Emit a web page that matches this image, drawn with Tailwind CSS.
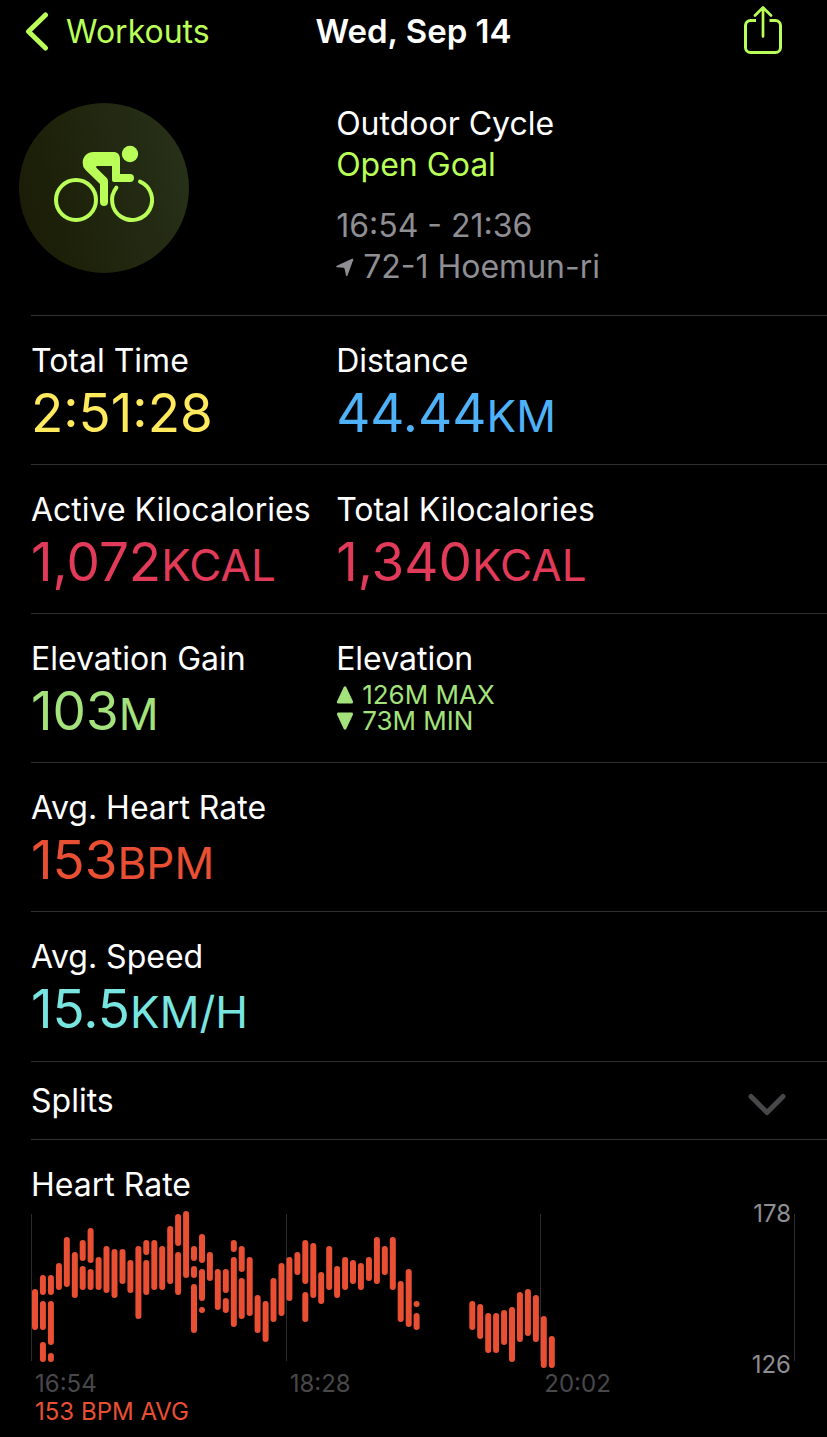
<!DOCTYPE html>
<html lang="en">
<head>
    <meta charset="UTF-8">
    <meta name="viewport" content="width=device-width, initial-scale=1.0">
    <title>Workout - Wed, Sep 14</title>
    <script src="https://cdn.jsdelivr.net/npm/@tailwindcss/browser@4"></script>
</head>
<body class="bg-black min-h-screen text-white font-['Inter',sans-serif] text-[32px] leading-[41px]">
    <!-- Nav bar -->
    <header class="grid grid-cols-[1fr_auto_1fr] items-center h-[62px] px-6">
        <a href="#" class="flex items-center gap-4 text-[#b9ff57]">
            <svg class="w-[26px] h-[40px]" viewBox="0 0 26 40" fill="none" stroke="currentColor" stroke-width="5" stroke-linecap="round" stroke-linejoin="round">
                <path d="M21.500 4 4.500 20.500 21.500 37"/>
            </svg>
            Workouts
        </a>
        <h1 class="text-[33px] font-semibold">Wed, Sep 14</h1>
        <button type="button" aria-label="Share" class="justify-self-end mr-5 text-[#b9ff57]">
            <svg class="w-[40px] h-[50px]" viewBox="0 0 40 50" fill="none" stroke="currentColor" stroke-width="3" stroke-linecap="round" stroke-linejoin="round">
                <path d="M13 14.500H7.500a5 5 0 0 0-5 5V41.500a5 5 0 0 0 5 5H32.500a5 5 0 0 0 5-5V19.500a5 5 0 0 0-5-5H26.500" stroke-linecap="butt"/>
                <path d="M20 30.500V2M12 9.500 20 1.500 28 9.500" stroke-width="2.700"/>
            </svg>
        </button>
    </header>

    <main class="pl-[31px]">
        <!-- Workout summary -->
        <section class="grid grid-cols-[23fr_37fr] pt-[41px] pb-7">
            <div class="-ml-3 size-[170px] rounded-full bg-linear-75 from-[#1a1b05] to-[#28321a]">
                <svg viewBox="0 0 510 510" fill="none" stroke="#b9ff57" stroke-width="12" stroke-linecap="round">
                    <circle cx="171" cy="291" r="60"/>
                    <path d="M363 236A60 60 0 1 1 292 254"/>
                    <g fill="#b9ff57" stroke="none">
                        <circle cx="333" cy="153" r="24.500"/>
                        <path d="M191 179c0-18 14-32 32-32H283c12 0 20 8 20 20V213H333a12 12 0 0 1 0 24H285q-6 0-6-6V189H235q-6 0-3 5L264 226q3 3 3 8V297a12 12 0 0 1-24 0V243L199 200q-8-8-8-21z"/>
                    </g>
                </svg>
            </div>
            <div>
                <p>Outdoor Cycle</p>
                <p class="text-[#b9ff57]">Open Goal</p>
                <p class="mt-5 text-[#8e8e93]">16:54 - 21:36</p>
                <p class="flex items-center gap-2 text-[#8e8e93]">
                    <svg class="w-[19px] h-[23px]" viewBox="0 -3 19 23" fill="currentColor">
                        <path d="M16 .800Q17.700.200 17.200 1.900L11.500 17.600Q10.800 19 10 17.500L8.600 11Q8.400 9.900 7.400 9.800L.900 9.200Q-.400 8.500.800 7.700z"/>
                    </svg>
                    72-1 Hoemun-ri
                </p>
            </div>
        </section>

        <!-- Metrics -->
        <dl>
            <div class="grid grid-cols-[23fr_37fr] border-t border-[#303032] pt-6 pb-[19px]">
                <div>
                    <dt>Total Time</dt>
                    <dd class="text-[53px] leading-[64px] text-[#ffe95c]">2:51:28</dd>
                </div>
                <div>
                    <dt>Distance</dt>
                    <dd class="text-[53px] leading-[64px] text-[#4fb2f8]">44.44<span class="text-[44px] leading-none">KM</span></dd>
                </div>
            </div>
            <div class="grid grid-cols-[23fr_37fr] border-t border-[#303032] pt-6 pb-[19px]">
                <div>
                    <dt>Active Kilocalories</dt>
                    <dd class="text-[53px] leading-[64px] text-[#e23a59]">1,072<span class="text-[44px] leading-none">KCAL</span></dd>
                </div>
                <div>
                    <dt>Total Kilocalories</dt>
                    <dd class="text-[53px] leading-[64px] text-[#e23a59]">1,340<span class="text-[44px] leading-none">KCAL</span></dd>
                </div>
            </div>
            <div class="grid grid-cols-[23fr_37fr] border-t border-[#303032] pt-6 pb-[19px]">
                <div>
                    <dt>Elevation Gain</dt>
                    <dd class="text-[53px] leading-[64px] text-[#a4e27c]">103<span class="text-[44px] leading-none">M</span></dd>
                </div>
                <div>
                    <dt class="pb-[3px]">Elevation</dt>
                    <dd class="flex items-center gap-2 text-[26px] leading-[26px] text-[#a4e27c]">
                        <svg class="w-[18px] h-[18px]" viewBox="0 0 18 18" fill="currentColor"><path d="M7.800 1Q9-.500 10.200 1L16.800 15Q17.500 17.500 15.500 17.500H2.500Q.500 17.500 1.200 15z"/></svg>
                        126M MAX
                    </dd>
                    <dd class="flex items-center gap-2 text-[26px] leading-[26px] text-[#a4e27c]">
                        <svg class="w-[18px] h-[18px]" viewBox="0 0 18 18" fill="currentColor"><path d="M7.800 17Q9 18.500 10.200 17L16.800 3Q17.500.500 15.500.500H2.500Q.500.500 1.200 3z"/></svg>
                        73M MIN
                    </dd>
                </div>
            </div>
            <div class="border-t border-[#303032] pt-6 pb-[19px]">
                <dt>Avg. Heart Rate</dt>
                <dd class="text-[53px] leading-[64px] text-[#e95033]">153<span class="text-[44px] leading-none">BPM</span></dd>
            </div>
            <div class="border-t border-[#303032] pt-6 pb-5">
                <dt>Avg. Speed</dt>
                <dd class="text-[53px] leading-[64px] text-[#78e5e1]">15.5<span class="text-[44px] leading-none">KM/H</span></dd>
            </div>
        </dl>

        <!-- Splits -->
        <button type="button" class="flex w-full items-center justify-between border-y border-[#303032] h-[79px] pr-10">
            <span>Splits</span>
            <svg class="w-[40px] h-[24px] mt-2" viewBox="0 0 40 24" fill="none" stroke="#48484a" stroke-width="5" stroke-linecap="round" stroke-linejoin="round">
                <path d="M4 3.500 20 19.500 36 3.500"/>
            </svg>
        </button>

        <!-- Heart rate chart -->
        <section class="pt-6 pr-8">
            <h2>Heart Rate</h2>
            <div class="relative">
                <svg class="w-full" viewBox="0 0 764 165" fill="none">
                    <path d="M.500 9V156M255.500 9V156M509.500 9V156M763.500 9V156" stroke="#2c2c2e"/>
                    <path id="heartBars" stroke="#e95033" stroke-width="6" stroke-linecap="round"/>
                </svg>
                <div class="absolute top-0 -bottom-1 right-1 flex flex-col justify-between text-right text-2xl leading-[18px] text-[#8e8e93]">
                    <span>178</span>
                    <span>126</span>
                </div>
            </div>
            <div class="grid grid-cols-3 text-2xl leading-7 text-[#48484a]">
                <span class="pl-1">16:54</span>
                <span class="pl-1">18:28</span>
                <span class="pl-1">20:02</span>
            </div>
            <p class="pl-1 text-2xl leading-7 text-[#e95033]">153 BPM AVG</p>
        </section>
    </main>

    <script>
        // One entry per time slot: list of [top, bottom] ranges
        const slots = [
            [[84, 125]], [[70, 90], [96, 125], [137, 157]], [[70, 90], [96, 140], [148, 157]], [[58, 85]],
            [[32, 82]], [[47, 93]], [[35, 56], [61, 85]], [[23, 58], [64, 85]],
            [[52, 85]], [[41, 88]], [[44, 93]], [[44, 79]],
            [[55, 88]], [[41, 114]], [[35, 50], [55, 90]], [[35, 85]],
            [[41, 85]], [[21, 79]], [[9, 41], [47, 90]], [[6, 73]],
            [[41, 56], [61, 73], [79, 128]], [[29, 58], [64, 96], [102, 108]], [[47, 76]], [[64, 105]],
            [[64, 88], [93, 108]], [[35, 47], [52, 122]], [[41, 67], [73, 114]], [[52, 111]],
            [[90, 128]], [[96, 137]], [[73, 117]], [[58, 111]],
            [[52, 96]], [[47, 70]], [[35, 79], [87, 117]], [[38, 93]],
            [[67, 99]], [[41, 85]], [[61, 93]], [[52, 85]],
            [[55, 79]], [[58, 85]], [[52, 76]], [[32, 79]],
            [[41, 70]], [[32, 85]], [[76, 117]], [[64, 122]],
            [[96, 102], [108, 125]], [], [], [], [], [], [],
            [[96, 125]], [[99, 134]], [[108, 148]], [[108, 148]], [[105, 140]], [[102, 157]],
            [[87, 137]], [[84, 131]], [[90, 137]], [[111, 163]], [[131, 163]]
        ];

        const d = slots.flatMap((ranges, i) => {
            const x = (4 + i * 7.95).toFixed(1);
            return ranges.map(([top, bottom]) => `M${x} ${top + 3}V${bottom - 2.99}`);
        }).join('');
        document.getElementById('heartBars').setAttribute('d', d);
    </script>
</body>
</html>
